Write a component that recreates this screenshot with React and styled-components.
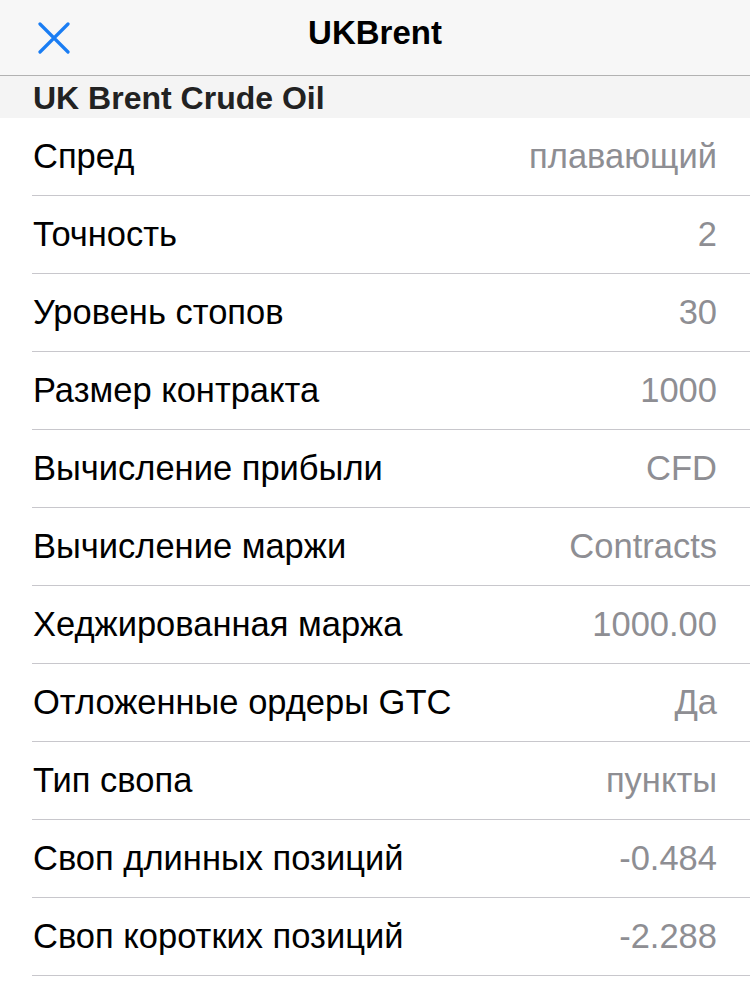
import React from 'react';
import styled, { createGlobalStyle } from 'styled-components';

const Global = createGlobalStyle`
  body {
    margin: 0;
    background: #ffffff;
    font-family: "Liberation Sans", Arial, sans-serif;
  }
`;

const Page = styled.div`
  width: 750px;
  min-height: 986px;
  background: #ffffff;
`;

const NavBar = styled.header`
  height: 75px;
  background: #f7f7f7;
  border-bottom: 1px solid #b2b2b2;
  display: grid;
  grid-template-columns: 110px 1fr 110px;
  align-items: center;
`;

const CloseButton = styled.button`
  border: none;
  background: none;
  padding: 0 0 0 38px;
  height: 75px;
  display: flex;
  align-items: center;
  cursor: pointer;
`;

const NavTitle = styled.h1`
  margin: 0;
  text-align: center;
  font-size: 33px;
  font-weight: bold;
  color: #000;
  padding-bottom: 10px;
`;

const SectionHeader = styled.div`
  height: 42px;
  background: #f4f4f4;
  padding-left: 33px;
  font-size: 32px;
  font-weight: bold;
  color: #222;
  line-height: 44px;
`;

const List = styled.ul`
  list-style: none;
  margin: 0;
  padding: 0 0 0 32px;
`;

const Row = styled.li`
  height: 77px;
  border-bottom: 1px solid #c8c7cc;
  display: flex;
  align-items: center;
  justify-content: space-between;
  padding-right: 33px;
  font-size: 34.5px;
`;

const Label = styled.span`
  color: #000;
  padding-left: 1px;
`;

const Value = styled.span`
  color: #8e8e93;
`;

const rows = [
  ['Спред', 'плавающий'],
  ['Точность', '2'],
  ['Уровень стопов', '30'],
  ['Размер контракта', '1000'],
  ['Вычисление прибыли', 'CFD'],
  ['Вычисление маржи', 'Contracts'],
  ['Хеджированная маржа', '1000.00'],
  ['Отложенные ордеры GTC', 'Да'],
  ['Тип свопа', 'пункты'],
  ['Своп длинных позиций', '-0.484'],
  ['Своп коротких позиций', '-2.288'],
];

export default function App() {
  return (
    <Page>
      <Global />
      <NavBar>
        <CloseButton aria-label="Закрыть">
          <svg width="32" height="32" viewBox="0 0 32 32">
            <path d="M2 2 L30 30 M30 2 L2 30" stroke="#1a7df3" strokeWidth="3.2" strokeLinecap="round" fill="none" />
          </svg>
        </CloseButton>
        <NavTitle>UKBrent</NavTitle>
        <div />
      </NavBar>
      <SectionHeader>UK Brent Crude Oil</SectionHeader>
      <List>
        {rows.map(([label, value]) => (
          <Row key={label}>
            <Label>{label}</Label>
            <Value>{value}</Value>
          </Row>
        ))}
      </List>
    </Page>
  );
}
